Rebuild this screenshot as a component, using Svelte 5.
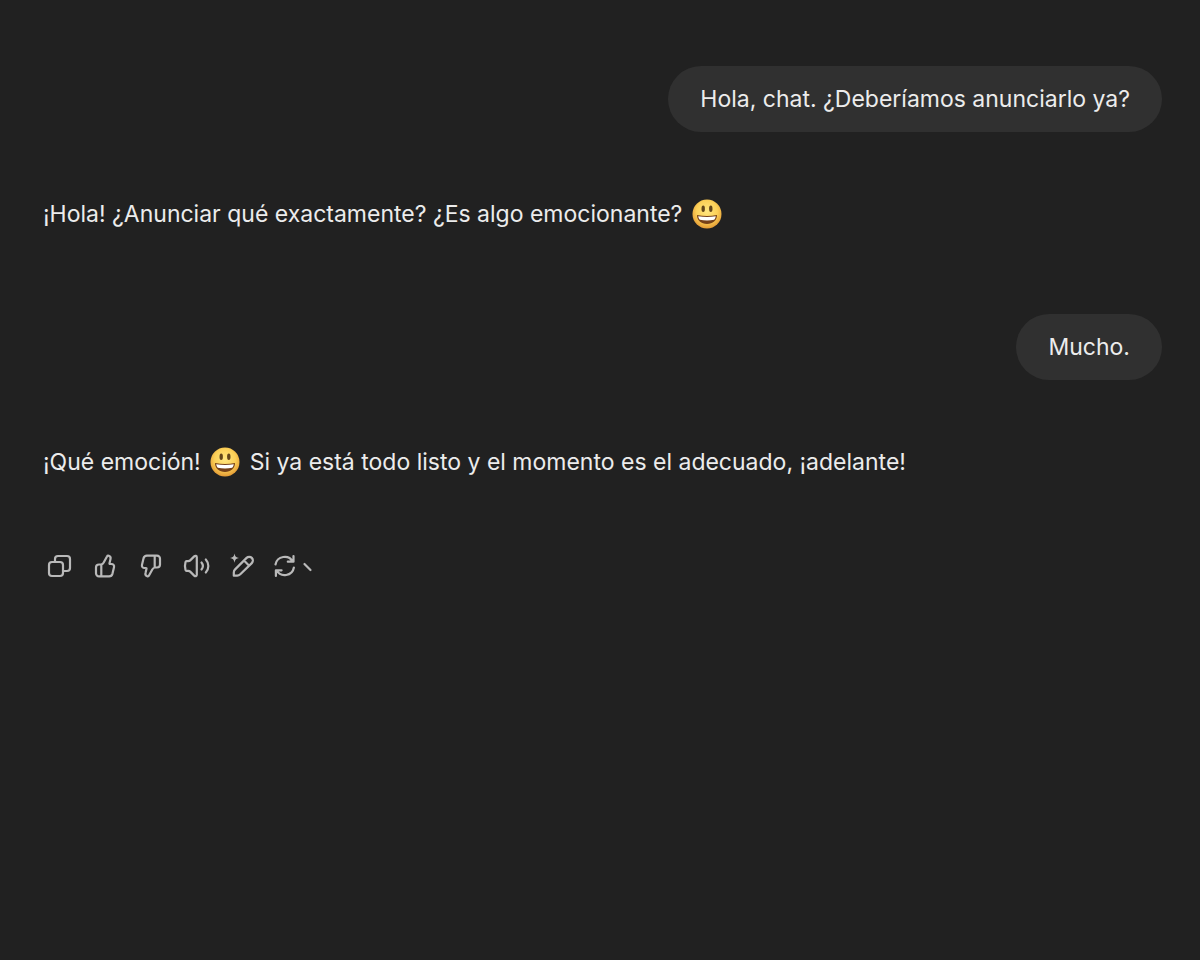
<script lang="ts">
	type Message = {
		id: number;
		role: 'user' | 'assistant';
		text: string;
	};

	const messages: Message[] = [
		{ id: 1, role: 'user', text: 'Hola, chat. ¿Deberíamos anunciarlo ya?' },
		{ id: 2, role: 'assistant', text: '¡Hola! ¿Anunciar qué exactamente? ¿Es algo emocionante? :D' },
		{ id: 3, role: 'user', text: 'Mucho.' },
		{
			id: 4,
			role: 'assistant',
			text: '¡Qué emoción! :D Si ya está todo listo y el momento es el adecuado, ¡adelante!'
		}
	];

	const thumb =
		'M4 14.5a3 3 0 0 1 3-3h2c1.4 0 2-.8 2.7-2l3.3-6.1c.4-.8 1-1 1.8-.7 1.6.6 2.1 1.8 1.7 3.3l-1 4.2c-.1.5.1.8.6.8h1.2c2 0 3.2 1.3 2.7 3.3l-1.5 6.3c-.5 1.9-1.6 2.7-3.4 2.7H7a3 3 0 0 1-3-3zM9.3 11.5v11.8';

	const actions = [
		{
			label: 'Copiar',
			path: 'M6 9h8a3 3 0 0 1 3 3v8a3 3 0 0 1-3 3H6a3 3 0 0 1-3-3v-8a3 3 0 0 1 3-3zM9 9V6a3 3 0 0 1 3-3h9a3 3 0 0 1 3 3v9a3 3 0 0 1-3 3h-4'
		},
		{ label: 'Buena respuesta', path: thumb },
		{ label: 'Mala respuesta', path: thumb, flipped: true },
		{
			label: 'Leer en voz alta',
			path: 'M2.5 8.2h1.7c.8 0 1.4-.2 2-.8l4-4c1.1-1 2.6-.6 2.6.9v17.4c0 1.5-1.5 1.9-2.6.9l-4-4c-.6-.6-1.200-.8-2-.8H2.500c-.5 0-.8-.3-1-.9-.7-2.500-.7-5.300 0-7.800.2-.6.5-.9 1-.9zM17.500 9.500c1.600 2 1.600 5 0 7M21.800 6.500c3.400 3.800 3.400 9.200 0 13'
		},
		{
			label: 'Editar en lienzo',
			path: 'M3.8 22.7v-3.2c0-1.2.4-2.2 1.3-3.1L16.600 4.900a3.500 3.500 0 0 1 5.200 5.200L10.300 21.300c-.9.9-1.900 1.400-3.100 1.400zM14 7.500l5.200 5.200',
			star: 'M4.5.5c.5 3 1.6 4 4.500 4.600-2.900.5-4 1.600-4.500 4.600C4 6.700 2.900 5.600 0 5.100 2.900 4.500 4 3.500 4.500.5z'
		},
		{
			label: 'Cambiar modelo',
			path: 'M2.500 11.500A9.300 9.300 0 0 1 19.800 8.700M20.500 3v5.700h-5.700M20.900 14.500A9.300 9.300 0 0 1 3.600 17.300M2.900 23v-5.700h5.700',
			menu: true
		}
	];
</script>

{#snippet smiley()}
	<svg class="emoji" viewBox="0 0 30 30" role="img" aria-label="Cara sonriente">
		<defs>
			<radialGradient id="skin" cx="50%" cy="40%" r="60%">
				<stop offset="0" stop-color="#ffe680" />
				<stop offset="0.6" stop-color="#fcd057" />
				<stop offset="1" stop-color="#e39a34" />
			</radialGradient>
		</defs>
		<circle cx="15" cy="15" r="14.5" fill="url(#skin)" />
		<ellipse cx="11.2" cy="9.8" rx="1.7" ry="3.3" fill="#63451a" />
		<ellipse cx="18.8" cy="9.8" rx="1.7" ry="3.3" fill="#63451a" />
		<path d="M5 16c6.5 1.3 13.5 1.3 20 0 0 5.5-4.3 9-10 9S5 21.5 5 16z" fill="#754018" />
		<path d="M6.2 17.2c5.8 1.1 11.8 1.1 17.6 0-.2 1.6-.8 2.7-1.6 3.5-4.7.9-9.7.9-14.4 0-.8-.8-1.4-1.9-1.6-3.5z" fill="#fff" />
	</svg>
{/snippet}

<main class="chat">
	{#each messages as message (message.id)}
		<p class="message {message.role}">
			{#each message.text.split(':D') as part, i}{#if i > 0}{@render smiley()}{/if}{part}{/each}
		</p>
	{/each}

	<div class="actions">
		{#each actions as action (action.label)}
			<button type="button" aria-label={action.label} class:menu={action.menu}>
				<svg class="icon" class:flipped={action.flipped} viewBox="0 0 26 26">
					<path d={action.path} />
					{#if action.star}
						<path class="star" d={action.star} />
					{/if}
				</svg>
				{#if action.menu}
					<svg class="caret" viewBox="0 0 14 26">
						<path d="M5.5 11l6 6" />
					</svg>
				{/if}
			</button>
		{/each}
	</div>
</main>

<style>
	:global(body) {
		margin: 0;
		background: #212121;
	}

	.chat {
		display: flex;
		flex-direction: column;
		box-sizing: border-box;
		min-height: 100vh;
		padding: 66px 38px 66px 43px;
		color: #ececec;
		font-family: Inter, 'Liberation Sans', sans-serif;
		font-size: 23px;
		line-height: 36px;
	}

	.message {
		margin: 0;
	}

	.user {
		align-self: flex-end;
		padding: 15px 32px;
		border-radius: 33px;
		background: #303030;
	}

	.assistant {
		margin: 64px 0 82px;
	}

	.emoji {
		width: 30px;
		height: 30px;
		margin: 0 3px;
		vertical-align: -7px;
	}

	.actions {
		display: flex;
		gap: 14px;
		margin-top: -12px;
	}

	button {
		display: flex;
		align-items: center;
		justify-content: center;
		width: 32px;
		height: 32px;
		padding: 0;
		border: 0;
		background: none;
		color: #b9b9b9;
		cursor: pointer;
	}

	button.menu {
		width: auto;
	}

	.icon,
	.caret {
		height: 26px;
		overflow: visible;
		fill: none;
		stroke: currentColor;
		stroke-width: 2.2;
		stroke-linecap: round;
		stroke-linejoin: round;
	}

	.icon {
		width: 26px;
	}

	.caret {
		width: 14px;
	}

	.flipped {
		transform: rotate(180deg);
	}

	.icon .star {
		fill: currentColor;
		stroke: none;
	}
</style>
